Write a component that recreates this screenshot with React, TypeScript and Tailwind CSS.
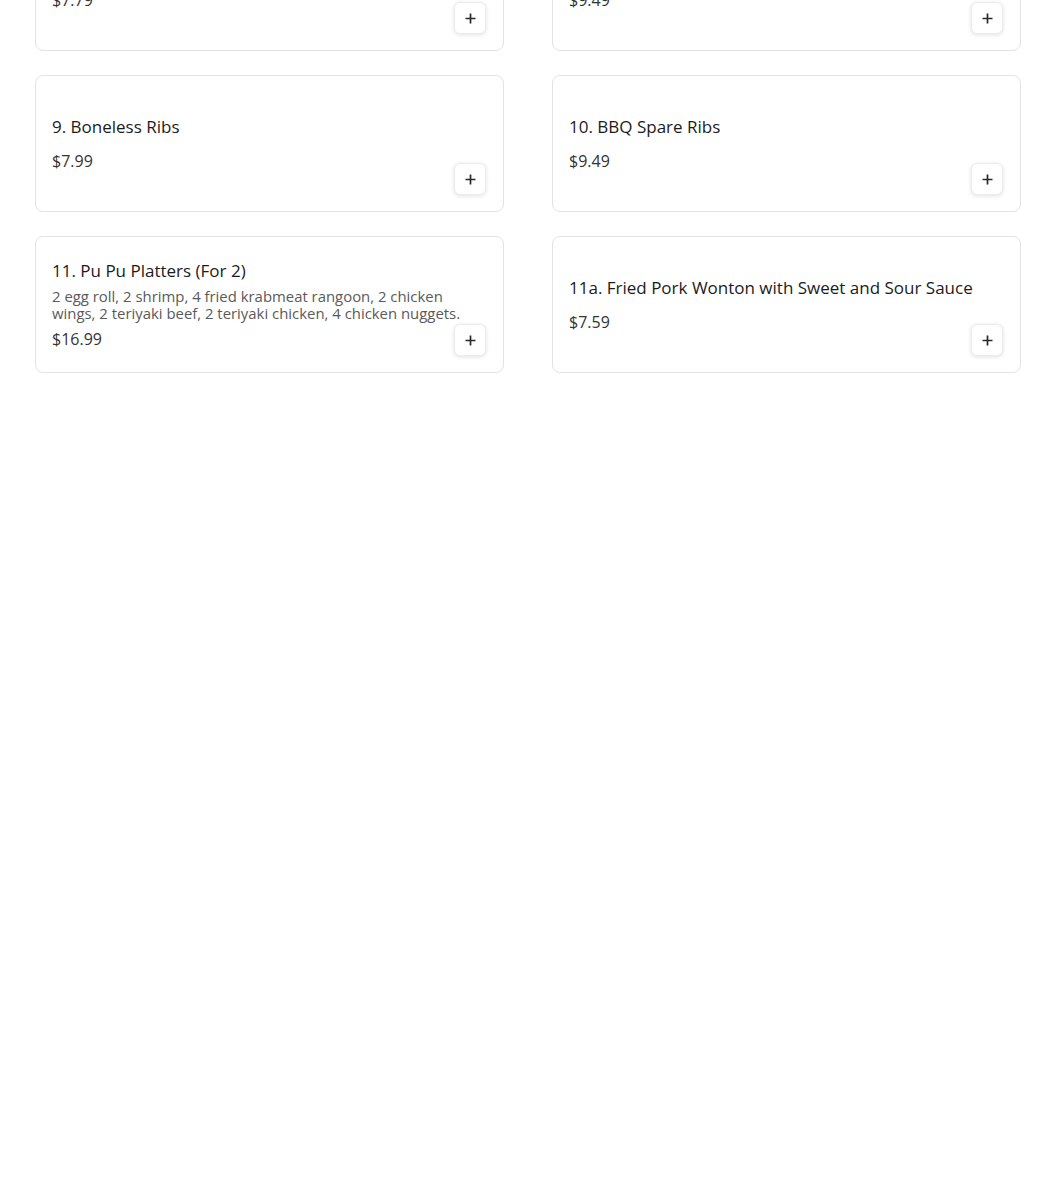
import React from "react";

type Item = { title: string; price: string; desc?: string };

const items: Item[] = [
  { title: "7. Chicken Wings", price: "$7.79" },
  { title: "8. Spare Ribs", price: "$9.49" },
  { title: "9. Boneless Ribs", price: "$7.99" },
  { title: "10. BBQ Spare Ribs", price: "$9.49" },
  {
    title: "11. Pu Pu Platters (For 2)",
    price: "$16.99",
    desc: "2 egg roll, 2 shrimp, 4 fried krabmeat rangoon, 2 chicken wings, 2 teriyaki beef, 2 teriyaki chicken, 4 chicken nuggets.",
  },
  { title: "11a. Fried Pork Wonton with Sweet and Sour Sauce", price: "$7.59" },
];

function PlusIcon() {
  return (
    <svg width="11" height="11" viewBox="0 0 11 11" fill="none">
      <path d="M5.5 0.5v10M0.5 5.5h10" stroke="#2a2a2a" strokeWidth="1.7" />
    </svg>
  );
}

function Card({ item }: { item: Item }) {
  return (
    <div className="relative flex h-[137px] items-center rounded-[8px] border border-[#e3e3e3] bg-white px-4">
      <div className="flex w-full flex-col">
        <div className="text-[17px] leading-[24px] font-medium text-[#1b1b1b]">
          {item.title}
        </div>
        {item.desc && (
          <div className="mt-[5px] text-[14.9px] leading-[17px] text-[#5a5a5a]">{item.desc}</div>
        )}
        <div className={(item.desc ? "mt-[5px]" : "mt-[10px]") + " text-[16px] leading-[24px] text-[#333333]"}>
          {item.price}
        </div>
      </div>
      <button className="absolute right-[17px] bottom-4 flex h-8 w-8 items-center justify-center rounded-[6px] border border-[#ececec] bg-white shadow-[0_1px_4px_rgba(0,0,0,0.12)]">
        <PlusIcon />
      </button>
    </div>
  );
}

export default function App() {
  return (
    <div
      className="min-h-[1201px] w-[1050px] bg-white overflow-hidden"
      style={{ fontFamily: '"Open Sans", "Liberation Sans", sans-serif' }}
    >
      <div className="mt-[-86px] grid grid-cols-[469px_469px] gap-x-[48px] gap-y-[24px] pl-[35px]">
        {items.map((it, i) => (
          <Card key={i} item={it} />
        ))}
      </div>
    </div>
  );
}
